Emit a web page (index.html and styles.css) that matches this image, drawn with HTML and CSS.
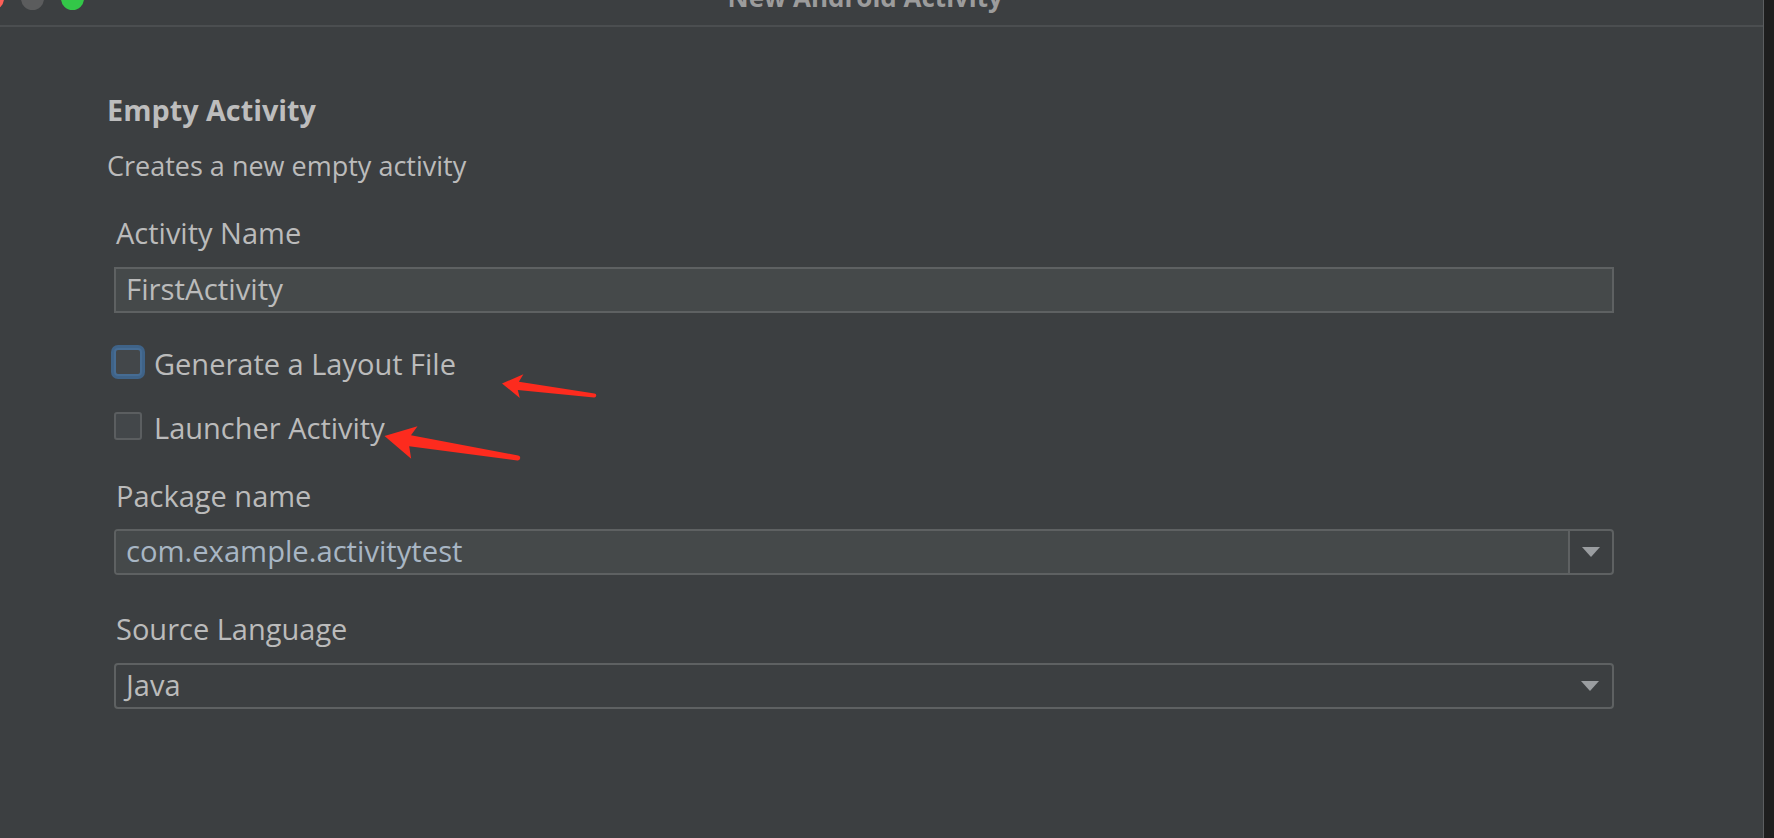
FILE: index.html
```html
<!DOCTYPE html>
<html lang="en">
<head>
<meta charset="utf-8">
<title>New Android Activity</title>
<link rel="stylesheet" href="styles.css">
</head>
<body>
<div class="window">
  <div class="main">
    <div class="titlebar">
      <div class="lights">
        <span class="light red"></span>
        <span class="light gray"></span>
        <span class="light green"></span>
      </div>
      <div class="title">New Android Activity</div>
    </div>
    <div class="content">
      <h1 class="heading">Empty Activity</h1>
      <p class="desc">Creates a new empty activity</p>
      <div class="form">
        <div class="label label-first">Activity Name</div>
        <div class="text-field">FirstActivity</div>
        <div class="check-row check-first">
          <span class="checkbox focused"></span>
          <span class="check-label">Generate a Layout File</span>
        </div>
        <div class="check-row check-second">
          <span class="checkbox"></span>
          <span class="check-label">Launcher Activity</span>
        </div>
        <div class="label label-package">Package name</div>
        <div class="combo editable">
          <div class="combo-value package">com.example.activitytest</div>
          <div class="combo-btn">
            <svg class="caret" width="18" height="10" viewBox="0 0 18 10"><polygon points="0,0 18,0 9,10"/></svg>
          </div>
        </div>
        <div class="label label-source">Source Language</div>
        <div class="combo">
          <div class="combo-value">Java</div>
          <div class="combo-btn">
            <svg class="caret" width="18" height="10" viewBox="0 0 18 10"><polygon points="0,0 18,0 9,10"/></svg>
          </div>
        </div>
      </div>
    </div>
    <svg class="annotations" width="1763" height="838" viewBox="0 0 1763 838">
      <path class="red-arrow" transform="translate(502 383.5) rotate(7.43)" d="M0,0 L20,-12 L16.5,-4 L93,-2 A2,2 0 0 1 93,2 L16.5,4.5 L19.5,12 Z"/>
      <path class="red-arrow" transform="translate(384.5 436) rotate(9.36)" d="M0,0 L31,-15 L26,-5 L135,-2.5 A2.5,2.5 0 0 1 135,2.5 L26,6 L30,18 Z"/>
    </svg>
  </div>
  <div class="edge"></div>
</div>
</body>
</html>
```

FILE: styles.css
```css
html, body {
  margin: 0;
  padding: 0;
}

body {
  width: 1774px;
  height: 838px;
  overflow: hidden;
  background: #3c3f41;
  font-family: "Open Sans", "DejaVu Sans", sans-serif;
  color: #bbbbbb;
}

.window {
  display: flex;
  height: 838px;
}

.main {
  flex: 1;
  position: relative;
  min-width: 0;
}

.edge {
  width: 10px;
  background: #1e1e1e;
  border-left: 1px solid #5c5e60;
}

/* title bar */
.titlebar {
  display: flex;
  align-items: flex-start;
  height: 25px;
  border-bottom: 2px solid #4b4e50;
}

.lights {
  display: flex;
  gap: 17px;
  margin-left: -19.5px;
  margin-top: -13px;
}

.light {
  width: 23px;
  height: 23px;
  border-radius: 50%;
}

.light.red { background: #fc5f57; }
.light.gray { background: #5b5c5d; }
.light.green { background: #33c748; }

.title {
  margin-left: 644px;
  margin-top: -21px;
  font-size: 26px;
  line-height: 36px;
  font-weight: 700;
  color: #9c9c9c;
  white-space: nowrap;
}

/* content */
.content {
  padding-top: 65px;
  padding-left: 107px;
}

.heading {
  margin: 0;
  font-size: 28.8px;
  line-height: 36px;
  font-weight: 700;
  color: #bdbdbd;
}

.desc {
  margin: 20px 0 0;
  font-size: 27px;
  line-height: 36px;
}

.form {
  display: flex;
  flex-direction: column;
  margin-left: 7px;
  width: 1500px;
  font-size: 29px;
  line-height: 36px;
}

.label {
  padding-left: 2px;
}

.label-first { margin-top: 31px; }
.label-package { margin-top: 30px; }
.label-source { margin-top: 36px; }

.text-field {
  margin-top: 16px;
  height: 42px;
  line-height: 40px;
  padding-left: 10px;
  background: #45494a;
  border: 2px solid #5e6162;
  font-size: 29.4px;
}

.check-row {
  display: flex;
  align-items: flex-start;
  height: 36px;
}

.check-first { margin-top: 35px; }
.check-second { margin-top: 28px; }

.checkbox {
  box-sizing: border-box;
  width: 28px;
  height: 28px;
  border: 2px solid #5b5e60;
  border-radius: 3px;
  background: #43474a;
  flex: none;
}

.checkbox.focused {
  border-color: #466c93;
  box-shadow: 0 0 0 3px #3f6388;
  border-radius: 4px;
}

.check-label {
  margin-left: 12px;
  margin-top: -2px;
}

.combo {
  margin-top: 15px;
  display: flex;
  height: 42px;
  border: 2px solid #5e6162;
  border-radius: 4px;
  overflow: hidden;
}

.label-source + .combo { margin-top: 16px; }

.combo-value {
  flex: 1;
  padding-left: 10px;
  line-height: 40px;
}

.combo.editable .combo-value {
  background: #45494a;
  border-right: 2px solid #5e6162;
}

.combo-value.package {
  color: #a8b6c4;
  font-size: 29.2px;
}

.combo-btn {
  width: 42px;
  display: flex;
  align-items: center;
  justify-content: center;
}

.caret {
  display: block;
  fill: #9a9da0;
}

.combo:not(.editable) .combo-btn {
  width: 44px;
}

/* annotations */
.annotations {
  position: absolute;
  top: 0;
  left: 0;
  pointer-events: none;
}

.red-arrow {
  fill: #fd2b1e;
}
```
